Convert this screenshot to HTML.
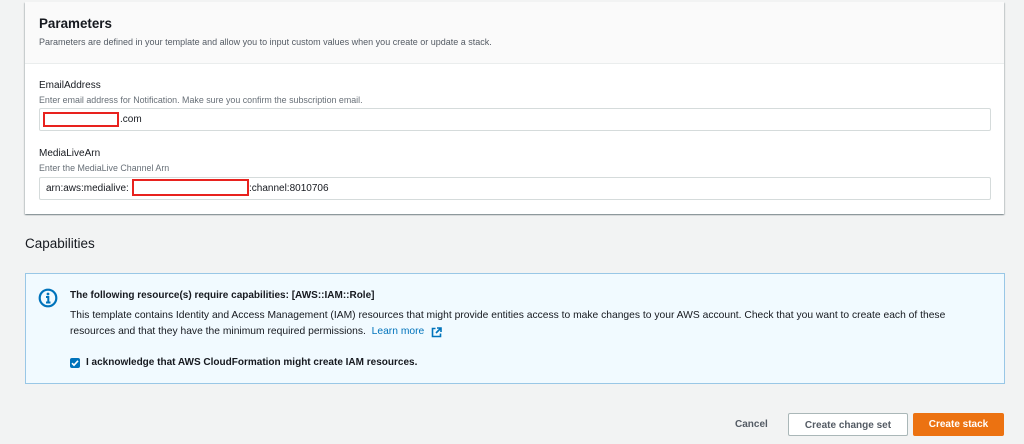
<!DOCTYPE html>
<html><head><style>
body{margin:0;width:1024px;height:444px;background:#f2f3f3;font-family:"Liberation Sans",sans-serif;color:#16191f;position:relative;overflow:hidden}
.a{position:absolute;white-space:nowrap}
.panel{position:absolute;left:25px;top:2px;width:979px;height:212px;background:#fff;box-shadow:0 1px 1px 0 rgba(0,28,36,.3),1px 1px 1px 0 rgba(0,28,36,.15),-1px 1px 1px 0 rgba(0,28,36,.15)}
.hdr{position:absolute;left:0;top:0;width:979px;height:61px;background:#fafafa;border-bottom:1px solid #eaeded}
.inp{position:absolute;left:39px;width:950px;height:21px;border:1px solid #d5dbdb;background:#fff;border-radius:2px}
.red{position:absolute;border:2px solid #e8221e;box-sizing:border-box}
.btn{position:absolute;top:413px;height:23px;border-radius:2px;font-size:10px;font-weight:bold;line-height:23px;text-align:center;box-sizing:border-box}
</style></head><body>
<div class="panel"><div class="hdr"></div></div>
<div class="a" style="left:39px;top:16px;font-size:13.4px;font-weight:bold">Parameters</div>
<div class="a" style="left:39px;top:37px;font-size:9px;color:#545b64">Parameters are defined in your template and allow you to input custom values when you create or update a stack.</div>
<div class="a" style="left:39px;top:80px;font-size:10px">EmailAddress</div>
<div class="a" style="left:39px;top:95px;font-size:8.9px;color:#687078">Enter email address for Notification. Make sure you confirm the subscription email.</div>
<div class="inp" style="top:108px"></div>
<div class="red" style="left:43px;top:112px;width:76px;height:15px"></div>
<div class="a" style="left:120px;top:114px;font-size:10px">.com</div>
<div class="a" style="left:39px;top:148px;font-size:10px">MediaLiveArn</div>
<div class="a" style="left:39px;top:163px;font-size:8.9px;color:#687078">Enter the MediaLive Channel Arn</div>
<div class="inp" style="top:177px"></div>
<div class="a" style="left:46px;top:183px;font-size:10px">arn:aws:medialive:</div>
<div class="red" style="left:132px;top:179px;width:117px;height:17px;background:#fff"></div>
<div class="a" style="left:249px;top:183px;font-size:10px">:channel:8010706</div>
<div class="a" style="left:25px;top:236px;font-size:13.5px">Capabilities</div>
<div style="position:absolute;left:25px;top:273px;width:978px;height:109px;background:#f1faff;border:1px solid #99c7e6"></div>
<svg class="a" style="left:38px;top:288px" width="20" height="20" viewBox="0 0 20 20"><circle cx="10" cy="10" r="8.3" fill="none" stroke="#0073bb" stroke-width="2.2"/><circle cx="10" cy="6" r="1.4" fill="#0073bb"/><path d="M8 9h2.3v5M8 14.5h4.5" stroke="#0073bb" stroke-width="2" fill="none"/></svg>
<div class="a" style="left:70px;top:290px;font-size:10px;font-weight:bold">The following resource(s) require capabilities: [AWS::IAM::Role]</div>
<div class="a" style="left:70px;top:310px;font-size:10.3px">This template contains Identity and Access Management (IAM) resources that might provide entities access to make changes to your AWS account. Check that you want to create each of these</div>
<div class="a" style="left:70px;top:326px;font-size:10.3px">resources and that they have the minimum required permissions.&nbsp; <span style="color:#0073bb">Learn more</span></div>
<svg class="a" style="left:431px;top:327px" width="11" height="11" viewBox="0 0 11 11"><path d="M4.5 1.5H1.5v8h8V6.5M6 1h4v4M10 1L5 6" stroke="#0073bb" stroke-width="1.6" fill="none"/></svg>
<div class="a" style="left:70px;top:358px;width:10px;height:10px;background:#0073bb;border-radius:2px"></div>
<svg class="a" style="left:70px;top:358px" width="10" height="10"><path d="M2 5.2l2 2 4-4.4" stroke="#fff" stroke-width="1.6" fill="none"/></svg>
<div class="a" style="left:86px;top:357px;font-size:10px;font-weight:bold">I acknowledge that AWS CloudFormation might create IAM resources.</div>
<div class="a" style="left:735px;top:419px;font-size:10px;font-weight:bold;color:#545b64">Cancel</div>
<div class="btn" style="left:788px;width:120px;background:#fff;border:1px solid #aab7b8;color:#545b64">Create change set</div>
<div class="btn" style="left:913px;width:91px;background:#ec7211;color:#fff">Create stack</div>
</body></html>
